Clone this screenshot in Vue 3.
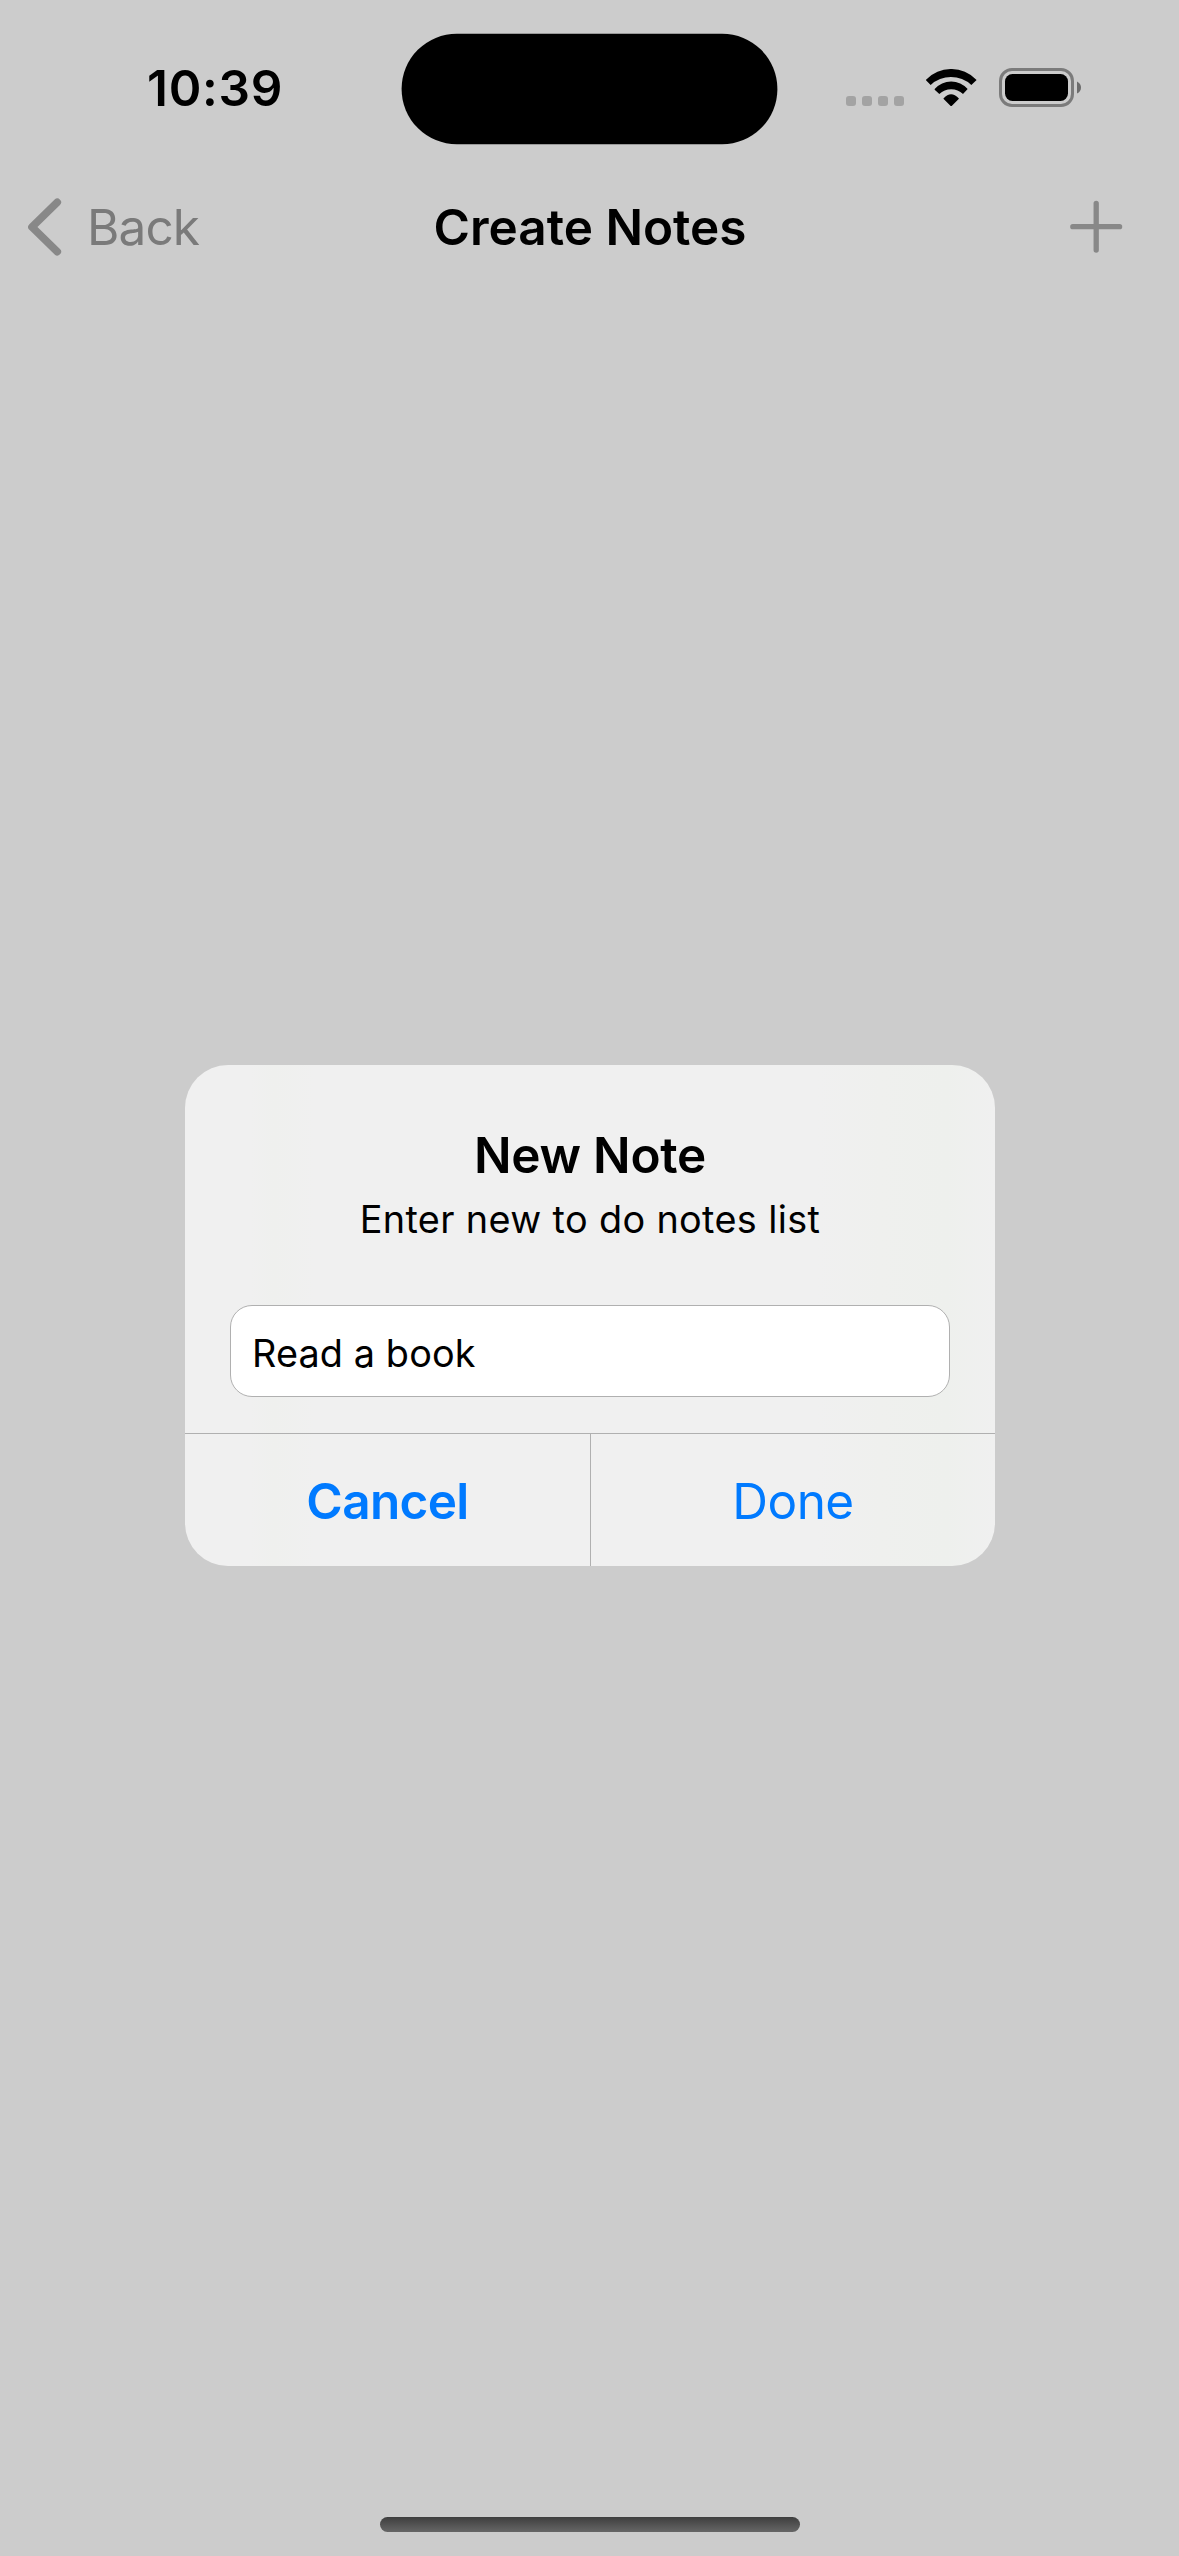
<script setup>
import { ref } from 'vue'

const note = ref('Read a book')
</script>

<template>
  <div class="screen">
    <header class="status">
      <span class="time">10:39</span>
      <svg class="island" viewBox="0 0 378 113" width="378" height="113">
        <rect x="1.600" y="0.670" width="375.800" height="110.600" rx="55.300" />
      </svg>
      <div class="indicators">
        <div class="dots"><i v-for="n in 4" :key="n"></i></div>
        <svg class="wifi" viewBox="319 86 151 112" width="50.33" height="37.33">
          <path d="M319 118A105 105 0 0 1 470 118Q471 119 470 120L455 134A90 90 0 0 0 333 134L319 120Q318 119 319 118Z" />
          <path d="M345 146A66 66 0 0 1 444 146L430 161A51 51 0 0 0 359 161L345 148Z" />
          <path d="M372 174Q394 150 417 174Q418 175 417 176L396 197Q394.500 199 393 197L372 176Q371 175 372 174Z" />
        </svg>
        <svg class="battery" viewBox="0 0 82 39" width="82" height="39">
          <rect x="1.500" y="1.500" width="72" height="36" rx="11.500" fill="none" stroke="#7b7b7b" stroke-width="3" />
          <rect x="6" y="6" width="63" height="27" rx="7.500" />
          <path d="M78 13.500Q82 15.500 82 19.500T78 25.500Z" fill="#6c6c6c" />
        </svg>
      </div>
    </header>

    <nav class="navbar">
      <div class="back">
        <svg viewBox="0 0 34 58" width="34" height="58">
          <path d="M29.300 4.300L4 29L29.300 53.700" fill="none" stroke="#888" stroke-width="7.600" stroke-linecap="round" stroke-linejoin="round" />
        </svg>
        <span>Back</span>
      </div>
      <h1>Create Notes</h1>
      <svg class="add" viewBox="0 0 54 54" width="54" height="54">
        <path d="M27.200 3.300V50.100M3.800 26.700H50.600" stroke="#888" stroke-width="5.300" stroke-linecap="round" />
      </svg>
    </nav>

    <main class="content"></main>
    <div class="home"></div>

    <div class="overlay">
      <section class="dialog">
        <div class="body">
          <h2>New Note</h2>
          <p>Enter new to do notes list</p>
          <div class="field">{{ note }}</div>
        </div>
        <div class="actions">
          <button class="cancel">Cancel</button>
          <button class="done">Done</button>
        </div>
      </section>
    </div>
  </div>
</template>

<style>
body {
  background: #ccc;
}
</style>

<style scoped>
.screen {
  position: relative;
  box-sizing: border-box;
  display: flex;
  flex-direction: column;
  width: 1179px;
  height: 2556px;
  padding-bottom: 24px;
  overflow: hidden;
  background: #ccc;
  color: #000;
  font-family: Inter, "Liberation Sans", sans-serif;
  font-size: 49.5px;
  line-height: 60px;
}

.status {
  display: grid;
  grid-template-columns: 400px 378px 1fr;
  align-items: start;
  height: 176px;
}

.time {
  margin-top: 58px;
  padding-left: 147px;
  font-weight: 600;
  letter-spacing: 0.7px;
}

.island {
  margin-top: 33px;
}

.indicators {
  display: flex;
  align-items: flex-start;
  height: 39px;
  margin-top: 68px;
  padding-left: 68px;
}

.dots {
  display: flex;
  gap: 6px;
  margin-top: 28px;
}

.dots i {
  width: 10px;
  height: 10px;
  border-radius: 3px;
  background: #a3a3a3;
}

.wifi {
  margin: 0.7px 0 0 22.3px;
}

.battery {
  margin-left: 22.37px;
}

.navbar {
  display: grid;
  grid-template-columns: 1fr auto 1fr;
  align-items: center;
  height: 102px;
}

.back {
  display: flex;
  align-items: center;
  padding-left: 28px;
  color: #7a7a7a;
  letter-spacing: -0.9px;
}

.back span {
  margin-left: 25px;
}

h1,
h2,
p {
  margin: 0;
}

h1,
h2 {
  font-size: 49.5px;
  font-weight: 600;
  letter-spacing: 0;
}

h1 {
  padding-left: 1px;
}

.add {
  justify-self: end;
  margin-right: 56px;
}

.content {
  flex: 1;
}

.home {
  align-self: center;
  width: 420px;
  height: 15px;
  border-radius: 8px;
  background: linear-gradient(#3e3e3e, #666);
}

.overlay {
  position: absolute;
  inset: 0;
  display: flex;
  justify-content: center;
  align-items: flex-start;
  padding: 1065px 0 0 1px;
}

.dialog {
  width: 810px;
  height: 501px;
  overflow: hidden;
  border-radius: 43px;
  background: linear-gradient(90deg, #f0f0f0 8%, #eff0ee 11%, #f0f0f0 16%, #f0f0f0 78%, #eff0ee 86%, #eef0ed 94%, #f0f0f0);
}

.body {
  box-sizing: border-box;
  height: 368px;
  padding: 60px 45px 0;
  text-align: center;
}

h2 {
  letter-spacing: -0.26px;
}

p {
  margin-top: 9px;
  font-size: 37.8px;
  line-height: 50px;
  letter-spacing: 0.36px;
}

.field {
  box-sizing: border-box;
  height: 92px;
  margin-top: 61px;
  padding: 2px 21px 0;
  border: 1px solid #b0b0b0;
  border-radius: 22px;
  background: #fff;
  font-size: 37.8px;
  line-height: 90px;
  letter-spacing: 0.12px;
  text-align: left;
}

.actions {
  display: grid;
  grid-template-columns: 1fr 1fr;
  height: 132px;
  border-top: 1px solid #b0b0b0;
}

button {
  padding: 2px 0 0;
  border: 0;
  background: none;
  color: #007aff;
  font: inherit;
  letter-spacing: -0.55px;
}

.cancel {
  font-weight: 600;
  letter-spacing: -0.66px;
}

.done {
  border-left: 1px solid #b0b0b0;
}
</style>
